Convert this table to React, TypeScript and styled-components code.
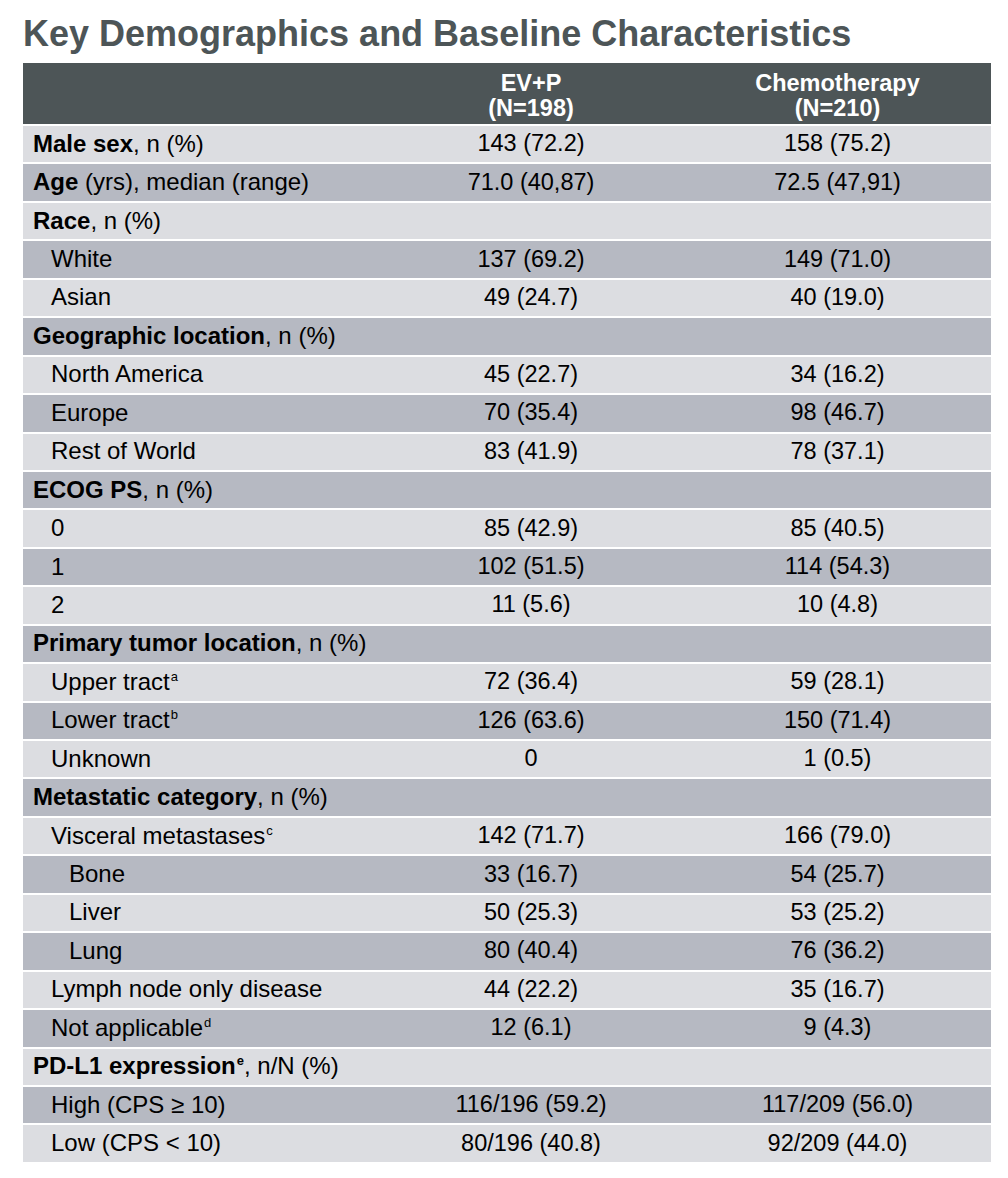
import React from 'react';
import styled, { createGlobalStyle } from 'styled-components';

const GlobalStyle = createGlobalStyle`
  html, body {
    margin: 0;
    padding: 0;
    background: #ffffff;
  }
  body {
    font-family: "Liberation Sans", Arial, sans-serif;
  }
`;

const Page = styled.div`
  width: 1008px;
  padding: 9px 17px 0 23px;
  box-sizing: border-box;
`;

const Title = styled.h1`
  margin: 0 0 5px 0;
  font-size: 36px;
  line-height: 49px;
  font-weight: 700;
  color: #4d5557;
`;

const Table = styled.div`
  width: 968px;
  display: flex;
  flex-direction: column;
  gap: 2px;
`;

const HeaderRow = styled.div`
  display: grid;
  grid-template-columns: 355px 306px 307px;
  height: 61px;
  background: #4d5557;
  color: #ffffff;
  font-weight: 700;
  font-size: 23.5px;
  line-height: 25px;
`;

const HeaderCell = styled.div`
  display: flex;
  flex-direction: column;
  align-items: center;
  justify-content: center;
  padding-top: 4px;
`;

const Row = styled.div<{ $dark: boolean }>`
  display: grid;
  grid-template-columns: 355px 306px 307px;
  height: 36.45px;
  align-items: center;
  background: ${p => (p.$dark ? '#b6b9c2' : '#dcdde1')};
  color: #000000;
  font-size: 23.5px;
`;

const Label = styled.div<{ $level: number }>`
  padding-left: ${p => 10 + p.$level * 18}px;
  font-size: 24px;
  white-space: nowrap;
  padding-bottom: 1px;
`;

const Value = styled.div`
  text-align: center;
  padding-bottom: 1px;
`;

const Sup = styled.sup`
  font-size: 13px;
  vertical-align: 9px;
  line-height: 0;
  margin-left: 1px;
`;

type RowData = {
  bold?: string;
  rest?: string;
  sup?: string;
  level: number;
  ev?: string;
  chemo?: string;
};

const rows: RowData[] = [
  { bold: 'Male sex', rest: ', n (%)', level: 0, ev: '143 (72.2)', chemo: '158 (75.2)' },
  { bold: 'Age', rest: ' (yrs), median (range)', level: 0, ev: '71.0 (40,87)', chemo: '72.5 (47,91)' },
  { bold: 'Race', rest: ', n (%)', level: 0 },
  { rest: 'White', level: 1, ev: '137 (69.2)', chemo: '149 (71.0)' },
  { rest: 'Asian', level: 1, ev: '49 (24.7)', chemo: '40 (19.0)' },
  { bold: 'Geographic location', rest: ', n (%)', level: 0 },
  { rest: 'North America', level: 1, ev: '45 (22.7)', chemo: '34 (16.2)' },
  { rest: 'Europe', level: 1, ev: '70 (35.4)', chemo: '98 (46.7)' },
  { rest: 'Rest of World', level: 1, ev: '83 (41.9)', chemo: '78 (37.1)' },
  { bold: 'ECOG PS', rest: ', n (%)', level: 0 },
  { rest: '0', level: 1, ev: '85 (42.9)', chemo: '85 (40.5)' },
  { rest: '1', level: 1, ev: '102 (51.5)', chemo: '114 (54.3)' },
  { rest: '2', level: 1, ev: '11 (5.6)', chemo: '10 (4.8)' },
  { bold: 'Primary tumor location', rest: ', n (%)', level: 0 },
  { rest: 'Upper tract', sup: 'a', level: 1, ev: '72 (36.4)', chemo: '59 (28.1)' },
  { rest: 'Lower tract', sup: 'b', level: 1, ev: '126 (63.6)', chemo: '150 (71.4)' },
  { rest: 'Unknown', level: 1, ev: '0', chemo: '1 (0.5)' },
  { bold: 'Metastatic category', rest: ', n (%)', level: 0 },
  { rest: 'Visceral metastases', sup: 'c', level: 1, ev: '142 (71.7)', chemo: '166 (79.0)' },
  { rest: 'Bone', level: 2, ev: '33 (16.7)', chemo: '54 (25.7)' },
  { rest: 'Liver', level: 2, ev: '50 (25.3)', chemo: '53 (25.2)' },
  { rest: 'Lung', level: 2, ev: '80 (40.4)', chemo: '76 (36.2)' },
  { rest: 'Lymph node only disease', level: 1, ev: '44 (22.2)', chemo: '35 (16.7)' },
  { rest: 'Not applicable', sup: 'd', level: 1, ev: '12 (6.1)', chemo: '9 (4.3)' },
  { bold: 'PD-L1 expression', sup: 'e', rest: ', n/N (%)', level: 0 },
  { rest: 'High (CPS \u2265 10)', level: 1, ev: '116/196 (59.2)', chemo: '117/209 (56.0)' },
  { rest: 'Low (CPS < 10)', level: 1, ev: '80/196 (40.8)', chemo: '92/209 (44.0)' },
];

const App = () => {
  return (
    <Page>
      <GlobalStyle />
      <Title>Key Demographics and Baseline Characteristics</Title>
      <Table>
        <HeaderRow>
          <HeaderCell />
          <HeaderCell>
            <span>EV+P</span>
            <span>(N=198)</span>
          </HeaderCell>
          <HeaderCell>
            <span>Chemotherapy</span>
            <span>(N=210)</span>
          </HeaderCell>
        </HeaderRow>
        {rows.map((r, i) => (
          <Row key={i} $dark={i % 2 === 1}>
            <Label $level={r.level}>
              {r.bold ? (
                <>
                  <b>{r.bold}</b>
                  {r.sup && <Sup><b>{r.sup}</b></Sup>}
                  {r.rest}
                </>
              ) : (
                <>
                  {r.rest}
                  {r.sup && <Sup>{r.sup}</Sup>}
                </>
              )}
            </Label>
            <Value>{r.ev}</Value>
            <Value>{r.chemo}</Value>
          </Row>
        ))}
      </Table>
    </Page>
  );
};

export default App;
